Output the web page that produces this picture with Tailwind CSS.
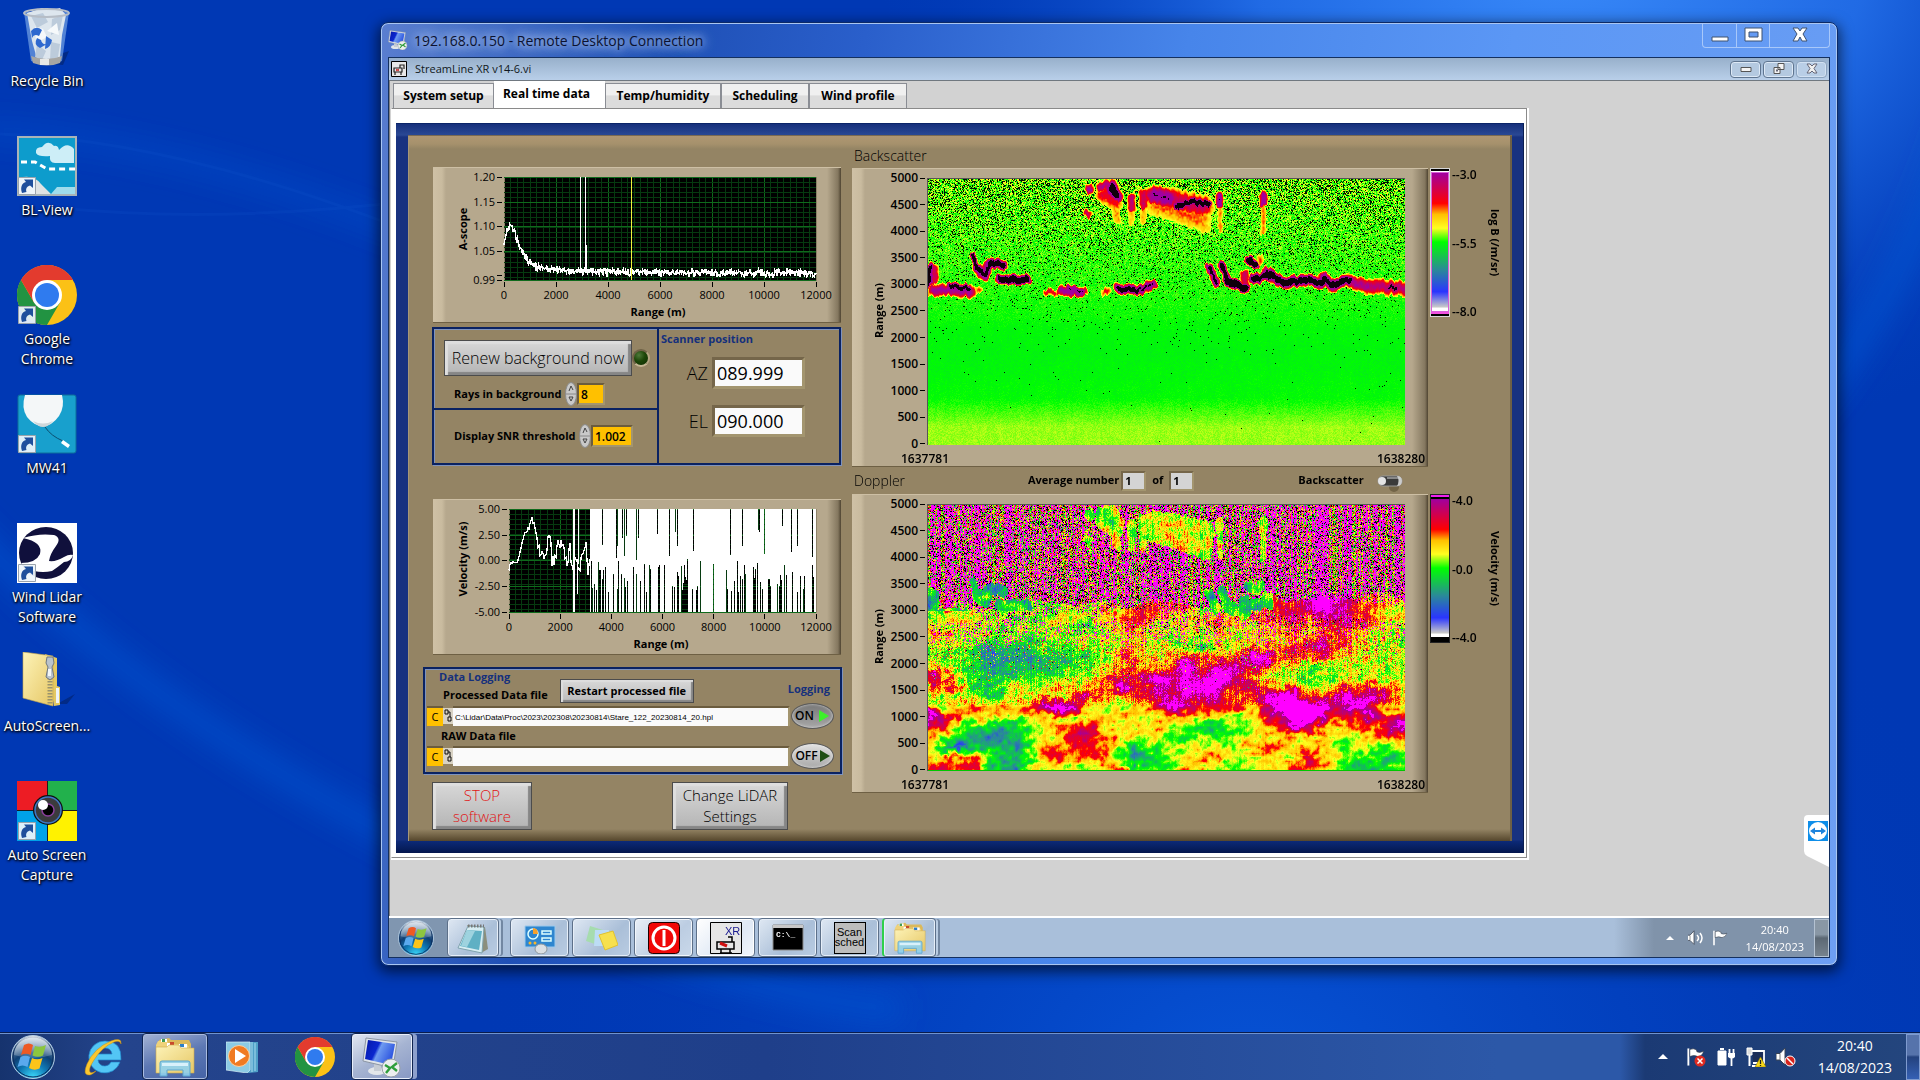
<!DOCTYPE html>
<html lang="en">
  <head>
    <meta charset="UTF-8" />
    <meta name="viewport" content="width=device-width, initial-scale=1.0" />
    <title>192.168.0.150 - Remote Desktop Connection</title>
    <script src="https://cdn.jsdelivr.net/npm/@tailwindcss/browser@4"></script>
  </head>
  <body class="relative h-screen overflow-hidden bg-[#0038b4] font-['Open_Sans','Noto_Sans',sans-serif] flex flex-col">
    <!-- shared icons -->
    <svg class="absolute size-0" aria-hidden="true">
      <defs>
        <radialGradient id="orbFill" cx=".5" cy="1" r="1">
          <stop offset="0" stop-color="#3fe0ff" />
          <stop offset=".35" stop-color="#0f78b4" />
          <stop offset=".6" stop-color="#0e3f74" />
          <stop offset="1" stop-color="#9db6cc" />
        </radialGradient>
        <linearGradient id="gloss" x2="0" y2="1">
          <stop offset="0" stop-color="#fff" stop-opacity=".75" />
          <stop offset="1" stop-color="#fff" stop-opacity=".15" />
        </linearGradient>
        <linearGradient id="folderFill" x2="1" y2="1">
          <stop offset="0" stop-color="#fdf3b8" />
          <stop offset="1" stop-color="#e6c765" />
        </linearGradient>
        <linearGradient id="screenFill" x2="1" y2="0.4">
          <stop offset="0" stop-color="#0418a8" />
          <stop offset=".45" stop-color="#0b27cf" />
          <stop offset=".55" stop-color="#6f9bf0" />
          <stop offset="1" stop-color="#2f57e0" />
        </linearGradient>
      </defs>
      <symbol id="chrome" viewBox="0 0 48 48">
        <circle cx="24" cy="24" r="24" fill="#fbc116" />
        <path d="M24 24 3.2 12A24 24 0 0 1 44.8 12H24z" fill="#e33b2e" />
        <path d="M3.2 12A24 24 0 0 0 24 48L34.4 30 24 24 13.6 30z" fill="#229342" />
        <path d="M3.2 12 13.6 30 24 24 24 12z" fill="#e33b2e" />
        <circle cx="24" cy="24" r="12" fill="#fff" />
        <circle cx="24" cy="24" r="9.6" fill="#2f7bef" />
      </symbol>
      <symbol id="shortcut" viewBox="0 0 18 18">
        <path d="M.5.5h17v17H.5z" fill="#eef5fb" fill-opacity=".93" stroke="#9aa3ac" />
        <path d="M4 16C2 10 4 6 8 5L6 2.500H15V11L12 8.500C8.500 9.500 7.500 12 8.500 15z" fill="#1f4f9c" />
      </symbol>
      <symbol id="orb" viewBox="0 0 44 44">
        <circle cx="22" cy="22" r="21.500" fill="url(#orbFill)" stroke="#b8cfe4" />
        <circle cx="22" cy="22" r="20" fill="none" stroke="#0c2c5c" />
        <path d="M3 20A19 19 0 0 1 41 20Q22 26 3 20z" fill="url(#gloss)" />
        <path d="M13 10q5-3 9 0l-2.500 10q-4.500-2.500-9.500 0z" fill="#ee5a24" />
        <path d="M24 11q5 2 11-1l-3 10.500q-5 2.500-10.500 0z" fill="#8cc63f" />
        <path d="M9.500 22q5-2.500 9.500 0l-2.500 10q-5-3-10 0z" fill="#5aa9ee" />
        <path d="M21 23q5 2.500 10.500 0l-3 10.500q-5 2.500-10.500-.5z" fill="#fcc419" />
      </symbol>
      <symbol id="folders" viewBox="0 0 40 40">
        <path d="M4 3l10-2 2 2h18l2 4v26H4z" fill="#dcb95a" />
        <path d="M1 8 3 4h9l2 3h18l2 3v24H1z" fill="#efd27a" />
        <path d="M12 6h7v4h-7zM24 7h8v4h-8zM6 2h6v3H6z" fill="#fff" />
        <path d="M7 2h3v3H7z" fill="#3f9b54" /><path d="M15 5h4v3h-4z" fill="#c9482c" /><path d="M25 7h4v3h-4z" fill="#2c7ec9" />
        <path d="M1 10h11l2-2h10l2 3h13v25H1z" fill="url(#folderFill)" stroke="#cfa94c" stroke-width=".6" />
        <path d="M5 39V26q0-2 2-2h26q2 0 2 2v13h-7v-6H12v6z" fill="#8fd0ee" fill-opacity=".9" stroke="#5aa5cf" />
        <path d="M7 26h26v3H7z" fill="#d8f1fb" />
      </symbol>
      <symbol id="rdp" viewBox="0 0 40 40">
        <ellipse cx="15" cy="34" rx="9" ry="4" fill="#e2e6ea" />
        <path d="M12 25h7v9h-7z" fill="#c6ccd4" />
        <path d="M4 1 35 5 31 31 1 24z" fill="#dfe4ea" stroke="#8c96a4" />
        <path d="M6 3 33 7 29 28 3 22z" fill="url(#screenFill)" />
        <circle cx="29" cy="31" r="9" fill="#eceeee" stroke="#9aa2a6" />
        <path d="M23 28l5 3-4 5M35 26l-5 4 5 4" stroke="#2f9e3a" stroke-width="2.400" fill="none" />
      </symbol>
      <symbol id="flag" viewBox="0 0 20 20">
        <path d="M2.500 1v18" stroke="#fff" stroke-width="2" />
        <path d="M4 2q4-1.500 7 .5l.5 2q3 1.500 7-.5-1 5-6 5.500-4-2-8.500 0z" fill="#fff" stroke="#333b48" stroke-width=".7" />
      </symbol>
      <symbol id="speaker" viewBox="0 0 20 20">
        <path d="M1 6.500h4L10 1v17l-5-5H1z" fill="#fff" stroke="#3a4454" />
        <path d="M5 7v6" stroke="#777" />
      </symbol>
    </svg>

    <!-- wallpaper -->
    <svg class="absolute inset-0 size-full" viewBox="0 0 1920 1080" preserveAspectRatio="none" aria-hidden="true">
      <defs>
        <radialGradient id="glowTop" cx="1560" cy="-60" r="680" gradientUnits="userSpaceOnUse" gradientTransform="scale(1 .75)">
          <stop offset="0" stop-color="#3a8bfa" /><stop offset=".45" stop-color="#2470ea" stop-opacity=".9" /><stop offset="1" stop-color="#0040c0" stop-opacity="0" />
        </radialGradient>
        <radialGradient id="glowLow" cx="1250" cy="1150" r="800" gradientUnits="userSpaceOnUse">
          <stop offset="0" stop-color="#0858dc" /><stop offset="1" stop-color="#0038b4" stop-opacity="0" />
        </radialGradient>
        <filter id="soft"><feGaussianBlur stdDeviation="14" /></filter>
      </defs>
      <path d="M0 0h1920v1080H0z" fill="#0038b4" />
      <path d="M0 0h1920v1080H0z" fill="url(#glowLow)" />
      <path d="M0 0h1920v1080H0z" fill="url(#glowTop)" />
      <g filter="url(#soft)" fill="none" stroke="#0a56d4" stroke-opacity=".6">
        <path d="M-40 520Q140 710 420 850T900 1010" stroke-width="24" />
        <path d="M-20 130Q180 140 420 240" stroke-width="12" />
        <path d="M1800 420Q1900 300 1960 120" stroke-width="26" />
      </g>
      <path d="M0 134Q180 140 420 236M60 208Q220 224 420 200" fill="none" stroke="#1b62d8" stroke-opacity=".12" stroke-width="3" />
    </svg>

    <!-- desktop icons -->
    <main class="relative flex-1 min-h-0">
      <ul class="absolute left-0 top-[7px] w-[94px] grid auto-rows-[129px] text-center text-[14px] leading-5 text-white [text-shadow:1px_1px_2px_#000,0_1px_3px_#000]">
        <li class="flex flex-col items-center gap-1">
          <svg class="w-12 h-[60px]" viewBox="0 0 48 60">
            <path d="M34 48l12-4-6 14-10-1z" fill="#022a86" />
            <path d="M1 5 8 54q16 7 31 0L46 5z" fill="#6c9be0" fill-opacity=".75" />
            <path d="M4 6 19 1 28 3 37 1 43 8 39 28 37 50 27 54 14 52 9 34z" fill="#dde6ee" />
            <path d="M8 9l12-3 5 9-11 6zM29 12l11-4-3 15-9 5zM14 37l9 7-4 9-7-3zM28 35l9 2-2 13-8 3z" fill="#bccbdb" />
            <path d="M12 20l8 2 4 8-11 6zM24 24l10-8 2 12z" fill="#f6f9fb" />
            <path d="M8 24q5-6 11-1l-3 6q-5-3-7 2zM17 41q-7-3-3-10l4 2q1 5 6 4zM23 29l6 4q-1 7-7 9z" fill="#2f69cf" />
            <ellipse cx="23.500" cy="6" rx="22.500" ry="4" fill="none" stroke="#b6bdc6" stroke-width="2" />
            <path d="M8 49q15 6 31 0l-2 7q-13 5-27 0z" fill="#a7a6a3" />
            <path d="M17 52h9v6h-9z" fill="#e9e9e6" />
          </svg>
          <span>Recycle Bin</span>
        </li>
        <li class="flex flex-col items-center gap-1">
          <svg class="w-[60px] h-[60px]" viewBox="0 0 60 60">
            <path d="M0 0h60v60H0z" fill="#a9b4b8" /><path d="M2 2h56v56H2z" fill="#0d9ccc" />
            <path d="M19 17q-1-6 6-6 6-8 12-1 4-1 5 4 8-9 15-1v14H38q-6 0-5-7-12 1-14-3z" fill="#cdeef7" />
            <path d="M4 26h14l12 7h28" stroke="#fff" stroke-width="3" stroke-dasharray="6 4" fill="none" />
            <path d="M2 58V42q14-4 22 6l10 10z" fill="#dfe3e4" /><path d="M34 58l6-7h18v7z" fill="#9fdcec" />
            <use href="#shortcut" x="1" y="41" width="18" height="18" />
          </svg>
          <span>BL-View</span>
        </li>
        <li class="flex flex-col items-center gap-1">
          <svg class="w-[60px] h-[60px]" viewBox="0 0 60 60"><use href="#chrome" width="60" height="60" /><use href="#shortcut" x="1" y="41" width="18" height="18" /></svg>
          <span>Google Chrome</span>
        </li>
        <li class="flex flex-col items-center gap-1">
          <svg class="w-[60px] h-[60px]" viewBox="0 0 60 60">
            <rect x="1" y="1" width="58" height="58" rx="2" fill="#18a0cd" stroke="#0c6e9a" />
            <path d="M8 1h37q3 12-3 21-7 10-16 10T10 23Q4 14 8 1z" fill="#f4f7f8" /><path d="M16 27q10 5 20 0-5 6-10 6t-10-6z" fill="#cfd7da" />
            <path d="M28 33q6 9 18 14" stroke="#0b4f70" fill="none" /><path d="M46 46l7 5-2 3-7-5z" fill="#fff" />
            <use href="#shortcut" x="1" y="41" width="18" height="18" />
          </svg>
          <span>MW41</span>
        </li>
        <li class="flex flex-col items-center gap-1">
          <svg class="w-[60px] h-[60px]" viewBox="0 0 60 60">
            <path d="M0 0h60v60H0z" fill="#fff" /><ellipse cx="29" cy="30" rx="27" ry="26" fill="#10103c" />
            <path d="M6 15q16-5 31-3 8 3 2 11-6 8-7 15 7 1 15-4 5-3 9-2-2 7-9 7-6 5-12 9-9 2-18 0-9-4-13-8 15 0 19-9 3-12-17-16z" fill="#fff" />
            <use href="#shortcut" x="1" y="41" width="18" height="18" />
          </svg>
          <span>Wind Lidar Software</span>
        </li>
        <li class="flex flex-col items-center gap-1">
          <svg class="w-[60px] h-[60px]" viewBox="0 0 60 60">
            <path d="M40 52 58 42 50 52z" fill="#022a86" />
            <path d="M28 2 40 6v28l3 1v18l-6 1z" fill="#e3c862" />
            <path d="M6 0 36 4v50L6 46z" fill="url(#folderFill)" stroke="#c9aa4c" stroke-width=".6" />
            <path d="M39 36h3v15h-3z" fill="#eef4f8" />
            <path d="M33 26v27" stroke="#9a936c" stroke-width="5" stroke-dasharray="1.500 1.500" />
            <path d="M30 5h6l1 6-2 4 2 10-4 3-4-3 2-10-2-4z" fill="#b9c3cc" stroke="#6d7780" /><path d="M31 17h3v7h-3z" fill="#f2f6f8" />
          </svg>
          <span>AutoScreen...</span>
        </li>
        <li class="flex flex-col items-center gap-1">
          <svg class="w-[60px] h-[60px]" viewBox="0 0 60 60">
            <path d="M0 0h30v30H0z" fill="#ed1c24" /><path d="M31 0h29v29H31z" fill="#22b14c" /><path d="M0 30h30v30H0z" fill="#00a2e8" /><path d="M31 30h29v30H31z" fill="#fff200" />
            <path d="M30.500 0v60M0 29.500h60" stroke="#1c1c1c" />
            <circle cx="31" cy="29" r="15" fill="#111" /><circle cx="31" cy="29" r="13" fill="#3b3b3d" stroke="#3e79c6" stroke-width="1.500" />
            <circle cx="31" cy="29" r="6" fill="#000" stroke="#8b3f9c" stroke-width="1.500" /><circle cx="26" cy="24" r="5" fill="#fff" />
            <use href="#shortcut" x="1" y="41" width="18" height="18" />
          </svg>
          <span>Auto Screen Capture</span>
        </li>
      </ul>

      <!-- remote desktop window -->
      <section class="absolute left-[380px] right-[82px] top-[22px] bottom-[66px] flex flex-col rounded-lg border border-[#0d2a66] bg-[linear-gradient(100deg,#5a7ed0_0%,#1f50b6_18%,#2a5fcb_30%,#4785ea_50%,#5b97f5_70%,#6e9ff3_100%)] px-[7px] pb-[7px] shadow-[inset_0_0_0_1px_#a9c6f2,0_4px_14px_2px_rgba(0,0,0,0.6)]">
        <header class="flex h-[34px] shrink-0 items-start justify-between">
          <h1 class="flex h-[34px] items-center gap-1.5 text-[14px] text-[#0b1230] [text-shadow:0_0_8px_#b9cdf2,0_0_12px_#b9cdf2,0_0_16px_#a9c0ee]">
            <svg class="size-5"><use href="#rdp" width="20" height="20" /></svg>
            192.168.0.150 - Remote Desktop Connection
          </h1>
          <div class="flex h-[25px] rounded-b border border-t-0 border-[#a8c8fa] divide-x divide-[#a8c8fa]">
            <button aria-label="Minimise" class="w-[34px] grid place-items-center"><svg class="w-[18px] h-4"><path d="M1 10h16v4H1z" fill="#fff" stroke="#3f5270" /></svg></button>
            <button aria-label="Maximise" class="w-[33px] grid place-items-center"><svg class="w-[19px] h-4"><path d="M1 1h17v13H1zM5 5v5h9V5z" fill="#fff" fill-rule="evenodd" stroke="#3f5270" /></svg></button>
            <button aria-label="Close" class="w-[59px] grid place-items-center"><svg class="w-4 h-4"><path d="M1 1h5l2 3 2-3h5l-4 6 4 7h-5l-2-4-2 4H1l4-7z" fill="#fff" stroke="#3f5270" /></svg></button>
          </div>
        </header>

        <div class="relative flex min-h-0 flex-1 flex-col border border-[#14305f] bg-[#d2d2d2]">
          <div class="flex h-[23px] shrink-0 items-center gap-2 border-b border-[#707880] bg-[linear-gradient(#98b0cb,#b9cfe9)] px-0.5 text-[11px] text-[#101820]">
            <svg class="w-4 h-4" viewBox="0 0 16 16"><path d="M.5.5h15v15H.5z" fill="#e8e8e8" stroke="#000" /><path d="M3 7h8v4H3zM9 7V4h4v4M4 11v3M10 11v3" fill="none" stroke="#222" stroke-width="1.200" /><path d="M5 8l3 2M8 8l-3 2" stroke="#c22" /></svg>
            <span class="flex-1">StreamLine XR v14-6.vi</span>
            <div class="flex gap-0.5">
              <button aria-label="Minimise VI" class="grid h-[17px] w-[31px] place-items-center rounded-sm border border-[#5f7590] bg-[#b4c9e0] shadow-[inset_0_0_0_1px_#dde9f6]"><svg class="w-3 h-2"><path d="M1 2.500h10v4H1z" fill="#f4f4f4" stroke="#555" /></svg></button>
              <button aria-label="Restore VI" class="grid h-[17px] w-[31px] place-items-center rounded-sm border border-[#5f7590] bg-[#b4c9e0] shadow-[inset_0_0_0_1px_#dde9f6]"><svg class="w-3 h-3"><path d="M5 .5h6v6H5zM1 4.500h6v6H1z" fill="#f4f4f4" stroke="#555" /><path d="M3 6.500h2v2H3z" fill="#667" /></svg></button>
              <button aria-label="Close VI" class="grid h-[17px] w-[31px] place-items-center rounded-sm border border-[#8ba3bf] bg-[#b9cee6] shadow-[inset_0_0_0_1px_#d2e1f2]"><svg class="w-3 h-3"><path d="M1 1h3l2 2 2-2h3L8 5.500 11 10H8L6 8l-2 2H1l3-4.500z" fill="#f0f0f0" stroke="#667" /></svg></button>
            </div>
          </div>

          <div class="flex-1 min-h-0 border-l border-[#808080] pl-px">
            <div role="tablist" class="flex items-end pl-0.5 text-[12px] font-bold text-black">
              <button role="tab" class="h-[25px] w-[101px] border border-b-0 border-[#8a8d94] bg-[linear-gradient(#f0f0f0_45%,#dcdcdc_50%)]">System setup</button>
              <button role="tab" aria-selected="true" class="h-[27px] w-[111px] bg-white pb-0.5 pr-1.5">Real time data</button>
              <button role="tab" class="h-[25px] w-[116px] border border-b-0 border-[#8a8d94] bg-[linear-gradient(#f0f0f0_45%,#dcdcdc_50%)]">Temp/humidity</button>
              <button role="tab" class="h-[25px] w-[88px] border border-b-0 border-[#8a8d94] bg-[linear-gradient(#f0f0f0_45%,#dcdcdc_50%)]">Scheduling</button>
              <button role="tab" class="h-[25px] w-[98px] border border-b-0 border-[#8a8d94] bg-[linear-gradient(#f0f0f0_45%,#dcdcdc_50%)]">Wind profile</button>
            </div>

            <div role="tabpanel" class="w-fit border border-t-[#8a8a8a] border-l-white border-r-[#8a8a8a] border-b-[#8a8a8a] bg-white pt-[14px] pl-1 pr-0.5 pb-1 shadow-[1px_1px_0_1px_#fff]">
              <div class="border-t border-[#0a2468] bg-[linear-gradient(#16307c_0px,#2a4894_11px,transparent_13px),linear-gradient(0deg,#04174e_0px,#0c2a78_12px,transparent_13px)] bg-[#183280] p-3 pt-[11px] shadow-[inset_-1px_0_0_#0a1e50]">
                <div class="flex w-[1104px] gap-2.5 border-t border-[#7a6a52] bg-[#948464] bg-[linear-gradient(#b09672_0px,#a5916c_8px,transparent_13px),linear-gradient(0deg,#55462c_0px,#948464_12px)] pl-[14px] pb-[11px] shadow-[inset_1px_0_0_#a89878,inset_-2px_0_0_#6e6044]">
                  <!-- left column -->
                  <div class="flex w-[420px] flex-col pt-[31px]">
                    <figure class="ml-[11px] h-[156px] w-[408px] bg-[linear-gradient(90deg,#cfc1a6_0px,#c9bb9f_9px,#b6a88d_13px,#b6a88d_394px,#84775f_405px,#4f4431_408px)] shadow-[inset_0_1px_0_#cdbfa4,inset_0_-1px_0_#6e6044]">
                      <svg id="ascope" width="408" height="156" class="text-[11px] [shape-rendering:crispEdges]">
                        <text x="34" y="62" text-anchor="middle" transform="rotate(-90 34 62)" class="text-[11px] font-bold">A-scope</text>
                        <text x="225" y="149" text-anchor="middle" class="text-[11px] font-bold">Range (m)</text>
                      </svg>
                    </figure>

                    <div class="mt-1 ml-2.5 flex h-[138px] w-[409px] border-2 border-[#0a2262] shadow-[inset_1px_1px_0_#7f93bd,1px_1px_0_#7f93bd]">
                      <div class="flex w-[225px] flex-col border-r-2 border-[#0a2262]">
                        <div class="h-[81px] border-b-2 border-[#0a2262] pl-2.5 pt-[11px]">
                          <div class="flex items-center">
                            <button class="h-9 w-[188px] border border-[#4c4c4c] bg-[linear-gradient(#d8d8d8,#b4b4b4)] text-[16px] font-light text-black shadow-[inset_3px_3px_1px_#dedede,inset_-3px_-3px_1px_#868686]">Renew background now</button>
                            <span class="size-[18px] rounded-full border-2 border-[#6f6247] border-r-[#b5a684] border-b-[#c5b694] bg-[radial-gradient(circle_at_35%_30%,#4f7a3a,#1c4608_45%,#0c2a02)]"></span>
                          </div>
                          <div class="flex items-center pl-2.5 pt-1.5 text-[11px] font-bold">
                            <label for="rays" class="w-[111px]">Rays in background</label>
                            <svg class="w-3 h-6" viewBox="0 0 12 24"><ellipse cx="6" cy="12" rx="5.500" ry="11.500" fill="#c9c9c9" stroke="#8b8b8b" /><path d="M4 9l2-5 2 4M4 15h4l-2 4z" fill="none" stroke="#444" /><path d="M1 12h10" stroke="#888" /></svg>
                            <input id="rays" value="8" class="h-[22px] w-7 border-2 border-[#6b5c3e] border-b-[#a3956f] border-r-[#a3956f] bg-[#ffc000] pl-0.5 text-[12px] font-semibold" />
                          </div>
                        </div>
                        <div class="flex items-center pl-5 text-[11px] font-bold pt-3.5">
                          <label for="snr" class="w-[125px]">Display SNR threshold</label>
                          <svg class="w-3 h-6" viewBox="0 0 12 24"><ellipse cx="6" cy="12" rx="5.500" ry="11.500" fill="#c9c9c9" stroke="#8b8b8b" /><path d="M4 9l2-5 2 4M4 15h4l-2 4z" fill="none" stroke="#444" /><path d="M1 12h10" stroke="#888" /></svg>
                          <input id="snr" value="1.002" class="h-[22px] w-[42px] border-2 border-[#6b5c3e] border-b-[#a3956f] border-r-[#a3956f] bg-[#ffc000] pl-0.5 text-[12px] font-semibold" />
                        </div>
                      </div>
                      <div class="flex-1 pl-0.5 pt-0.5 text-[18px]">
                        <h2 class="text-[11px] font-bold leading-4 text-[#15307c]">Scanner position</h2>
                        <div class="mt-2.5 flex items-center justify-end gap-1 pr-[34px]">
                          <label for="az" class="font-light">AZ</label>
                          <input id="az" value="089.999" class="h-8 w-[93px] border-[3px] border-[#75664a] border-b-[#a3956f] border-r-[#a3956f] bg-[#fafafa] pl-0.5" />
                        </div>
                        <div class="mt-4 flex items-center justify-end gap-1 pr-[34px]">
                          <label for="el" class="font-light">EL</label>
                          <input id="el" value="090.000" class="h-8 w-[93px] border-[3px] border-[#75664a] border-b-[#a3956f] border-r-[#a3956f] bg-[#fafafa] pl-0.5" />
                        </div>
                      </div>
                    </div>

                    <figure class="mt-[34px] ml-[11px] h-[156px] w-[408px] bg-[linear-gradient(90deg,#cfc1a6_0px,#c9bb9f_9px,#b6a88d_13px,#b6a88d_394px,#84775f_405px,#4f4431_408px)] shadow-[inset_0_1px_0_#cdbfa4,inset_0_-1px_0_#6e6044]">
                      <svg id="velocity" width="408" height="156" class="text-[11px] [shape-rendering:crispEdges]">
                        <text x="34" y="60" text-anchor="middle" transform="rotate(-90 34 60)" class="text-[11px] font-bold">Velocity (m/s)</text>
                        <text x="228" y="149" text-anchor="middle" class="text-[11px] font-bold">Range (m)</text>
                      </svg>
                    </figure>

                    <div class="mt-3 ml-px h-[107px] w-[419px] border-2 border-[#0a2262] text-[11px] font-bold leading-4 shadow-[inset_1px_1px_0_#7f93bd,1px_1px_0_#7f93bd]">
                      <div class="flex h-[35px] items-start pl-[14px] pr-2.5">
                        <div>
                          <h2 class="text-[#15307c]">Data Logging</h2>
                          <label for="proc" class="block pl-1 pt-0.5">Processed Data file</label>
                        </div>
                        <button class="ml-3 mt-2.5 h-6 w-[134px] border border-[#4c4c4c] bg-[linear-gradient(#d8d8d8,#bcbcbc)] text-[11px] shadow-[inset_2px_2px_1px_#dedede,inset_-2px_-2px_1px_#868686]">Restart processed file</button>
                        <h2 class="ml-auto pt-3 text-[#15307c]">Logging</h2>
                      </div>
                      <div class="flex h-[24px] items-center pl-0.5 pr-1.5">
                        <button class="h-5 w-4 border-t-2 border-[#6b5c3e] bg-[#ffc000] font-normal leading-4">C</button>
                        <svg class="w-[10px] h-4 bg-[#d8d2c4]"><path d="M2 2h3v4H2zM5 9h3v4H5zM5 4h2v5" fill="none" stroke="#111" /></svg>
                        <input id="proc" value="C:\Lidar\Data\Proc\2023\202308\20230814\Stare_122_20230814_20.hpl" class="h-[20px] w-[338px] border-t-2 border-r-2 border-t-[#6b5c3e] border-r-[#a3956f] bg-[#fafafa] pl-0.5 font-['Liberation_Sans',sans-serif] text-[8px] font-normal" />
                        <button class="ml-px h-[26px] w-[43px] shrink-0 rounded-[50%] border border-[#5a5a5a] bg-[linear-gradient(#777,#a8a8a8)] text-[12px] font-semibold shadow-[inset_0_0_3px_#ddd]"><span class="flex items-center justify-center gap-1">ON<svg class="w-3 h-3"><path d="M1 0l10 6-10 6z" fill="#3df02a" /></svg></span></button>
                      </div>
                      <label for="raw" class="block pl-4">RAW Data file</label>
                      <div class="flex h-[24px] items-center pl-0.5 pr-1.5">
                        <button class="h-5 w-4 border-t-2 border-[#6b5c3e] bg-[#ffc000] font-normal leading-4">C</button>
                        <svg class="w-[10px] h-4 bg-[#d8d2c4]"><path d="M2 2h3v4H2zM5 9h3v4H5zM5 4h2v5" fill="none" stroke="#111" /></svg>
                        <input id="raw" class="h-[20px] w-[338px] border-t-2 border-r-2 border-t-[#6b5c3e] border-r-[#a3956f] bg-[#fafafa]" />
                        <button class="ml-px h-[26px] w-[43px] shrink-0 rounded-[50%] border border-[#5a5a5a] bg-[linear-gradient(#e0e0e0,#a8a8a8)] text-[12px] font-semibold shadow-[inset_0_0_3px_#eee]"><span class="flex items-center justify-center gap-0.5">OFF<svg class="w-2.5 h-3"><path d="M0 0l10 6-10 6z" fill="#1f4f14" /></svg></span></button>
                      </div>
                    </div>

                    <div class="mt-2 ml-2.5 flex justify-between pr-[54px] text-[15px] font-light leading-[21px]">
                      <button class="h-12 w-[100px] border border-[#4c4c4c] bg-[linear-gradient(#d8d8d8,#b4b4b4)] text-[#e01414] shadow-[inset_3px_3px_1px_#dedede,inset_-3px_-3px_1px_#868686]">STOP<br />software</button>
                      <button class="h-12 w-[116px] border border-[#4c4c4c] bg-[linear-gradient(#d8d8d8,#b4b4b4)] text-black shadow-[inset_3px_3px_1px_#dedede,inset_-3px_-3px_1px_#868686]">Change LiDAR<br />Settings</button>
                    </div>
                  </div>

                  <!-- right column -->
                  <div class="flex-1 pb-px text-[12px] font-semibold">
                    <h2 class="flex h-8 items-end pb-0.5 pl-0.5 text-[14px] font-light">Backscatter</h2>
                    <div class="flex items-start gap-0.5">
                      <figure class="grid h-[299px] w-[576px] grid-cols-[75px_478px] content-start bg-[linear-gradient(90deg,#cfc1a6_0px,#c9bb9f_9px,#b6a88d_13px,#b6a88d_560px,#84775f_573px,#4f4431_576px)] pt-2.5 shadow-[inset_0_1px_0_#cdbfa4,inset_0_-1px_0_#6e6044]">
                        <div class="-mt-2 flex h-[281px] justify-end gap-1.5">
                          <span class="self-center rotate-180 text-[11px] font-bold leading-3 [writing-mode:vertical-rl]">Range (m)</span>
                          <ol data-axis class="flex h-[282px] flex-col justify-between text-right leading-4"></ol>
                        </div>
                        <canvas id="backscatter" width="477" height="266" class="border-l border-t border-[#555]"></canvas>
                        <div class="col-span-2 flex justify-between pl-[49px] leading-4"><span>1637781</span><span class="-mr-[20px]">1638280</span></div>
                      </figure>
                      <div class="flex">
                        <div class="flex h-[149px] w-5 flex-col border border-[#d8d8d8]">
                          <span class="h-[3px] border-b border-white bg-black"></span>
                          <span class="flex-1 border border-[#d860d8] bg-[linear-gradient(#a000a0_0%,#ff0000_22%,#ffc000_30%,#ffff20_40%,#00ff00_50%,#2a8a98_70%,#2a35ff_86%,#c8c8c8_97%,#ffffff_98%)]"></span>
                          <span class="h-1 border-t-2 border-[#f050e0] bg-black"></span>
                        </div>
                        <ol class="-mt-px flex h-[153px] w-[35px] flex-col justify-between pl-0.5 leading-4"><li>--3.0</li><li>--5.5</li><li>--8.0</li></ol>
                        <span class="h-[149px] text-center text-[11px] font-bold leading-5 [writing-mode:vertical-rl]">log B (/m/sr)</span>
                      </div>
                    </div>
                    <div class="flex h-[27px] items-center pl-0.5 text-[11px] font-bold">
                      <h2 class="w-[174px] text-[14px] font-light">Doppler</h2>
                      <label for="avg">Average number</label>
                      <input id="avg" value="1" class="ml-0.5 h-5 w-[25px] border-2 border-[#75664a] border-b-[#a3956f] border-r-[#a3956f] bg-[#d4d4d4] pl-0.5" />
                      <label for="avgOf" class="px-1.5">of</label>
                      <input id="avgOf" value="1" class="h-5 w-[25px] border-2 border-[#75664a] border-b-[#a3956f] border-r-[#a3956f] bg-[#d4d4d4] pl-0.5" />
                      <label for="mode" class="ml-[104px] w-[79px]">Backscatter</label>
                      <button id="mode"><svg class="w-[26px] h-6"><ellipse cx="17" cy="18" rx="5" ry="5" fill="#5c4e34" opacity=".6" /><rect x="1" y="7" width="24" height="10" rx="5" fill="#3a3a3a" stroke="#999" /><path d="M10 9h12" stroke="#888" stroke-width="2" /><circle cx="5" cy="12" r="4" fill="#e4e4e4" /><path d="M20 7q5 0 5 5t-5 5q3-5 0-10z" fill="#ccc" /></svg></button>
                    </div>
                    <div class="flex items-start gap-0.5">
                      <figure class="grid h-[299px] w-[576px] grid-cols-[75px_478px] content-start bg-[linear-gradient(90deg,#cfc1a6_0px,#c9bb9f_9px,#b6a88d_13px,#b6a88d_560px,#84775f_573px,#4f4431_576px)] pt-2.5 shadow-[inset_0_1px_0_#cdbfa4,inset_0_-1px_0_#6e6044]">
                        <div class="-mt-2 flex h-[281px] justify-end gap-1.5">
                          <span class="self-center rotate-180 text-[11px] font-bold leading-3 [writing-mode:vertical-rl]">Range (m)</span>
                          <ol data-axis class="flex h-[282px] flex-col justify-between text-right leading-4"></ol>
                        </div>
                        <canvas id="doppler" width="477" height="266" class="border-l border-t border-[#555]"></canvas>
                        <div class="col-span-2 flex justify-between pl-[49px] leading-4"><span>1637781</span><span class="-mr-[20px]">1638280</span></div>
                      </figure>
                      <div class="flex">
                        <div class="flex h-[149px] w-5 flex-col border border-[#222]">
                          <span class="h-1 border-b-2 border-black bg-[#f020f0]"></span>
                          <span class="flex-1 bg-[linear-gradient(#a000a0_0%,#ff0000_22%,#ffc000_30%,#ffff20_40%,#00ff00_50%,#2a8a98_70%,#2a35ff_86%,#c8c8c8_97%,#ffffff_98%)]"></span>
                          <span class="h-[5px] bg-black"></span>
                        </div>
                        <ol class="-mt-px flex h-[153px] w-[35px] flex-col justify-between pl-0.5 leading-4"><li>-4.0</li><li>-0.0</li><li>--4.0</li></ol>
                        <span class="h-[149px] text-center text-[11px] font-bold leading-5 [writing-mode:vertical-rl]">Velocity (m/s)</span>
                      </div>
                    </div>
                  </div>
                </div>
              </div>
            </div>
          </div>

          <a href="#" aria-label="TeamViewer" class="absolute right-0 bottom-[90px]">
            <svg class="block w-[25px] h-[52px]"><path d="M25 0H4Q0 0 0 4v32q0 3 3 5l22 11z" fill="#fff" /><path d="M4 6h20v20H4z" fill="#0e8ee9" /><circle cx="14" cy="16" r="9" fill="#fff" /><path d="M6 16l5-3.500v2.500h6v-2.500l5 3.500-5 3.500V17h-6v2.500z" fill="#1d84dd" /></svg>
          </a>

          <!-- remote taskbar -->
          <footer class="flex h-[41px] shrink-0 items-stretch gap-[3px] border-t-2 border-white bg-[linear-gradient(90deg,#8096b0_0px,#8096b0_58px,#a9bfda_64px,#a9bfda_1225px,#8093aa_1265px,#8093aa_100%)] pl-[9px]">
            <button aria-label="Start" class="grid w-9 place-items-center"><svg class="size-9"><use href="#orb" width="36" height="36" /></svg></button>
            <button aria-label="Notepad" class="ml-2.5 grid w-[52px] place-items-center rounded-sm border border-[#5d7089] bg-[linear-gradient(135deg,#dfe8f3,#aabfd8_60%,#b9cce2)] shadow-[inset_0_0_0_1px_#e6eef8,3px_0_0_-1px_#b9cce2,5px_0_0_-1px_#7287a2]"><svg class="size-8" viewBox="0 0 32 32"><path d="M10 3 28 5 31 27 24 31z" fill="#8b8f7c" /><path d="M11 4 27 5 25 31 1 26z" fill="#d6edf2" stroke="#7fa3ae" /><path d="M10 8 25 9 22 28 3 24z" fill="#5fb0c4" /><path d="M10 8l8 1-8 16-6-1z" fill="#9ed3df" /><path d="M11 4h16" stroke="#777" stroke-width="3" stroke-dasharray="1.500 1.500" /></svg></button>
            <button aria-label="Control panel" class="ml-2 grid w-[59px] place-items-center rounded-sm border border-[#5d7089] bg-[linear-gradient(135deg,#dfe8f3,#aabfd8_60%,#b9cce2)] shadow-[inset_0_0_0_1px_#e6eef8]"><svg class="size-8" viewBox="0 0 32 32"><path d="M1 4h30v21H1z" fill="#2e86cf" stroke="#9cc9ec" /><circle cx="9" cy="12" r="5" fill="none" stroke="#dff" stroke-width="1.500" /><path d="M9 12V6q5 0 5 6z" fill="#f6a12c" /><path d="M18 9h9v3h-9zM18 16h9v3h-9z" fill="none" stroke="#dff" stroke-width="1.500" /><circle cx="6" cy="21" r="1.500" fill="#f6b62c" /><circle cx="11" cy="21" r="1.500" fill="#f6b62c" /><ellipse cx="17" cy="27" rx="6" ry="5" fill="#dadfe3" stroke="#8d969c" /></svg></button>
            <button aria-label="Sticky notes" class="grid w-[59px] place-items-center rounded-sm border border-[#5d7089] bg-[linear-gradient(135deg,#dfe8f3,#aabfd8_60%,#b9cce2)] shadow-[inset_0_0_0_1px_#e6eef8]"><svg class="size-8" viewBox="0 0 32 32"><path d="M4 4l13 4-5 15-12-4z" fill="#a6dcae" /><path d="M9 8h14v16H8z" fill="#bcdcf5" /><path d="M13 13l14-4 5 14-13 5z" fill="#f7e04e" stroke="#e0c230" /></svg></button>
            <button aria-label="Shutdown" class="grid w-[59px] place-items-center rounded-sm border border-[#5d7089] bg-[linear-gradient(135deg,#e9eff7,#bccde2_60%,#c9d8ea)] shadow-[inset_0_0_0_1px_#f2f6fb]"><svg class="size-8" viewBox="0 0 32 32"><rect x=".5" y=".5" width="31" height="31" rx="4" fill="#f00808" stroke="#1c0000" /><circle cx="16" cy="16" r="11" fill="none" stroke="#fff" stroke-width="3" /><path d="M16 8v16" stroke="#fff" stroke-width="3" /></svg></button>
            <button aria-label="StreamLine XR" class="grid w-[59px] place-items-center rounded-sm border border-[#5d7089] bg-[linear-gradient(135deg,#ffffff,#dfe8f4_60%,#f2f7fd)] shadow-[inset_0_0_0_1px_#fff]"><svg class="size-8 overflow-visible" viewBox="0 0 32 32"><path d="M.5.5h31v31H.5z" fill="#e6e6e6" stroke="#000" /><text x="15" y="13" class="font-['Liberation_Sans',sans-serif] text-[11px] fill-[#1a1a90]">XR</text><path d="M7 20h17v7H7zM11 27v4M20 27v4M18 15h4v5M10 31h12" fill="none" stroke="#000" stroke-width="1.500" /><path d="M10 21l7 3" stroke="#d01010" stroke-width="3" /></svg></button>
            <button aria-label="Command prompt" class="grid w-[59px] place-items-center rounded-sm border border-[#5d7089] bg-[linear-gradient(135deg,#dfe8f3,#aabfd8_60%,#b9cce2)] shadow-[inset_0_0_0_1px_#e6eef8]"><svg class="size-8" viewBox="0 0 32 32"><path d="M1 3h30v25H1z" fill="#000" stroke="#8a8a8a" /><path d="M1 3h30v3H1z" fill="#c8c8c8" /><text x="4" y="15" class="font-['Liberation_Mono',monospace] text-[8px] font-bold fill-white">C:\_</text></svg></button>
            <button class="grid w-[59px] place-items-center rounded-sm border border-[#5d7089] bg-[linear-gradient(135deg,#dfe8f3,#aabfd8_60%,#b9cce2)] shadow-[inset_0_0_0_1px_#e6eef8]"><span class="h-8 w-8 border border-black bg-[#bdbdbd] pt-1 font-['Liberation_Sans',sans-serif] text-[11px] leading-[10px]">Scan sched</span></button>
            <button aria-label="Explorer" class="grid w-[54px] place-items-center rounded-sm border border-l-2 border-[#5d7089] border-l-[#2fd04c] bg-[linear-gradient(135deg,#dfe8f3,#aabfd8_60%,#b9cce2)] shadow-[inset_0_0_0_1px_#e6eef8,3px_0_0_-1px_#b9cce2,5px_0_0_-1px_#7287a2]"><svg class="size-8"><use href="#folders" width="32" height="32" /></svg></button>
            <div class="ml-auto flex items-center text-[11px] leading-[17px] text-white">
              <svg class="w-2 h-1"><path d="M0 4l4-4 4 4z" fill="#fff" /></svg>
              <svg class="ml-3.5 w-[18px] h-4"><use href="#speaker" width="16" height="16" x="-2" /><path d="M9 5q3 3 0 6M12 3q4 5 0 10" stroke="#fff" stroke-width="1.500" fill="none" /></svg>
              <svg class="ml-1.5 size-4"><use href="#flag" width="16" height="16" /></svg>
              <time class="ml-[18px] text-center">20:40<br />14/08/2023</time>
              <button aria-label="Show remote desktop" class="ml-2.5 h-[38px] w-[15px] border border-[#b4c2d2] bg-[linear-gradient(#8997a5_40%,#5c6874_50%,#76838f)]"></button>
            </div>
          </footer>
        </div>
      </section>
    </main>

    <!-- taskbar -->
    <footer class="relative flex h-12 shrink-0 items-stretch border-t border-[#0a1c4c] bg-[linear-gradient(90deg,#16336e_0px,#24448c_120px,#1f3f8a_40%,#2c58a8_78%,#2c58a8_1620px,#1b3a74_1645px,#24467e_100%)] pl-2.5 shadow-[inset_0_1px_0_#6f93cf]">
      <button aria-label="Start" class="grid w-[46px] place-items-center"><svg class="size-11"><use href="#orb" width="44" height="44" /></svg></button>
      <button aria-label="Internet Explorer" class="ml-7 grid w-10 place-items-center">
        <svg class="size-10" viewBox="0 0 40 40"><path d="M21 4a16 16 0 1 0 15 21h-9q-2 4-6 4-6 0-7-6h23Q38 4 21 4zm-7 13q1-6 7-6t7 6z" fill="#53c6f5" stroke="#1c82c8" stroke-width=".7" /><path d="M37 7Q38 0 27 4 10 11 3 27q-5 12 3 11 3-1 6-4-5 3-6 1-2-3 4-12Q18 10 30 5q6-2 7 2z" fill="#fbc72f" stroke="#c98f12" stroke-width=".5" /></svg>
      </button>
      <button aria-label="File Explorer" class="ml-[18px] grid w-[66px] place-items-center rounded border border-[#0f2450] bg-[linear-gradient(160deg,#a5b4d4,#5d78b4_50%,#4463a6)] shadow-[inset_0_0_0_1px_#a9bbe0]"><svg class="size-10"><use href="#folders" width="40" height="40" /></svg></button>
      <button aria-label="Media Player" class="ml-4 grid w-[36px] place-items-center">
        <svg class="w-8 h-8" viewBox="0 0 32 32"><path d="M4 1h28v30l-10 1z" fill="#4fa0c8" /><path d="M26 1v30M29 2v28" stroke="#a8dcee" /><path d="M0 1h24v28l-3 3-21-3z" fill="#8ccbe4" stroke="#d5eef7" stroke-width=".7" /><circle cx="13" cy="15" r="10.500" fill="#f07a22" stroke="#fbd0a0" /><path d="M9 8l11 7-11 7z" fill="#fff" /></svg>
      </button>
      <button aria-label="Google Chrome" class="ml-[34px] grid w-[42px] place-items-center"><svg class="size-10"><use href="#chrome" width="40" height="40" /></svg></button>
      <button aria-label="Remote Desktop Connection" class="ml-[15px] grid w-[62px] place-items-center rounded border border-[#0f2450] bg-[linear-gradient(150deg,#e3e8f2,#a6b4d2_50%,#8798c4)] shadow-[inset_0_0_0_1px_#e8eefa,5px_0_0_-1px_#8da0cc]"><svg class="size-10"><use href="#rdp" width="40" height="40" /></svg></button>
      <div class="ml-auto flex items-center text-[14px] leading-[22px] text-white">
        <svg class="w-2.5 h-[5px]"><path d="M0 5l5-5 5 5z" fill="#fff" /></svg>
        <svg class="ml-[18px] size-5"><use href="#flag" width="19" height="20" /><circle cx="14" cy="14" r="5.500" fill="#e02a20" /><path d="M11.500 11.500l5 5M16.500 11.500l-5 5" stroke="#fff" stroke-width="1.500" /></svg>
        <svg class="ml-2.5 size-5"><path d="M2 4h8v14H2z" fill="#fff" stroke="#fff" /><path d="M4 1h4v2H4z" fill="#fff" /><path d="M12 6h7v4q-3 3-7 0z" fill="#fff" /><path d="M13.500 2v4M17.500 2v4M15.500 11v8" fill="none" stroke="#fff" stroke-width="1.800" /></svg>
        <svg class="ml-2.5 size-5"><path d="M6 4h12v12H7" fill="#1b2e58" stroke="#fff" stroke-width="1.800" /><path d="M1 1h5v7H1z" fill="#ddd" stroke="#fff" /><path d="M3.500 8v11M6 19h6" stroke="#fff" stroke-width="2" /><path d="M14.500 10l5.500 10H9z" fill="#f8d818" stroke="#8a7300" stroke-width=".6" /><path d="M14.500 13v4M14.500 18v1" stroke="#222" stroke-width="1.300" /></svg>
        <svg class="ml-2.5 size-5"><use href="#speaker" width="20" height="20" x="-1" /><circle cx="14" cy="14" r="5" fill="#d8231c" stroke="#fff" /><path d="M11 11l6 6" stroke="#fff" stroke-width="1.500" /></svg>
        <time class="ml-[22px] text-center">20:40<br />14/08/2023</time>
        <button aria-label="Show desktop" class="ml-3.5 h-[46px] w-[14px] border border-[#7f9bcf] bg-[linear-gradient(#5673ab_45%,#24427e_50%,#3560b4)]"></button>
      </div>
    </footer>

    <script>
      const NS = "http://www.w3.org/2000/svg";

      const makeRandom = (seed) => () => {
        seed = (seed + 0x6d2b79f5) | 0;
        let t = Math.imul(seed ^ (seed >>> 15), 1 | seed);
        t = (t + Math.imul(t ^ (t >>> 7), 61 | t)) ^ t;
        return ((t ^ (t >>> 14)) >>> 0) / 4294967296;
      };
      const random = makeRandom(20230814);

      const add = (svg, name, attrs, text) => {
        const el = document.createElementNS(NS, name);
        for (const key in attrs) el.setAttribute(key, attrs[key]);
        if (text !== undefined) el.textContent = text;
        svg.appendChild(el);
      };

      // range axis of the two time-height plots
      document.querySelectorAll("[data-axis]").forEach((axis) => {
        for (let r = 5000; r >= 0; r -= 500) {
          const li = document.createElement("li");
          li.className = "flex items-center justify-end gap-0.5 pr-0.5 after:h-px after:w-[5px] after:bg-black";
          li.textContent = r;
          axis.appendChild(li);
        }
      });

      // line graph frame: black plot with green grid, ticks and numbers
      const drawFrame = (svg, x0, y0, w, h, yTicks, gridY) => {
        add(svg, "rect", { x: x0, y: y0, width: w, height: h, fill: "#000", stroke: "#8d8369" });
        for (let i = 1; i < 48; i++) {
          const x = x0 + (i * w) / 48;
          add(svg, "path", { d: `M${x} ${y0}v${h}`, stroke: i % 8 ? "#063a10" : "#0f6a1c" });
        }
        for (let y = y0 + gridY; y < y0 + h; y += gridY)
          add(svg, "path", { d: `M${x0} ${y}h${w}`, stroke: "#063a10" });
        for (let i = 0; i <= 6; i++) {
          const x = x0 + (i * w) / 6;
          add(svg, "path", { d: `M${x} ${y0 + h + 2}v5`, stroke: "#000" });
          add(svg, "text", { x, y: y0 + h + 19, "text-anchor": "middle" }, i * 2000);
        }
        yTicks.forEach(([label, y]) => {
          add(svg, "path", { d: `M${x0} ${y0 + y}h${w}`, stroke: "#0f6a1c" });
          add(svg, "path", { d: `M${x0 - 7} ${y0 + y}h5`, stroke: "#000" });
          add(svg, "text", { x: x0 - 9, y: y0 + y + 4, "text-anchor": "end" }, label);
        });
      };

      const interp = (pts, x) => {
        for (let i = 1; i < pts.length; i++) {
          if (x <= pts[i][0]) {
            const [a, b] = pts[i - 1], [c, d] = pts[i];
            return b + ((d - b) * (x - a)) / (c - a);
          }
        }
        return pts[pts.length - 1][1];
      };

      const drawAscope = () => {
        const svg = document.getElementById("ascope");
        const x0 = 71, y0 = 10, w = 312, h = 103;
        drawFrame(svg, x0, y0, w, h, [["1.20", 0], ["1.15", 25], ["1.10", 49], ["1.05", 74], ["0.99", 103]], 5);
        add(svg, "path", { d: `M${x0 - 7} ${y0 + 98}h5`, stroke: "#000" });
        const shape = [[0, 66], [3, 52], [6, 48], [10, 54], [16, 70], [22, 82], [30, 89], [45, 92], [75, 94], [110, 95], [312, 96]];
        let d = `M${x0} ${y0 + 66}`;
        for (let x = 0; x <= w; x += 0.5) d += `L${x0 + x} ${y0 + interp(shape, x) + (random() + random() - 1) * 5}`;
        add(svg, "path", { d, fill: "none", stroke: "#fff", "stroke-width": 1.4 });
        add(svg, "path", { d: `M${x0 + 76.5} ${y0}v95M${x0 + 81.5} ${y0}v95M${x0 + 82.5} ${y0 + 68}v28`, stroke: "#fff" });
        add(svg, "path", { d: `M${x0 + 127.5} ${y0}v${h}`, stroke: "#f2f23c" });
      };

      const drawVelocity = () => {
        const svg = document.getElementById("velocity");
        const x0 = 76, y0 = 10, w = 307, h = 103;
        drawFrame(svg, x0, y0, w, h, [["5.00", 0], ["2.50", 26], ["0.00", 51], ["-2.50", 77], ["-5.00", 103]], 5);
        const shape = [[0, 60], [2, 54], [8, 55], [12, 40], [15, 25], [20, 19], [23, 10], [26, 18], [29, 38], [34, 50], [38, 37], [41, 24], [43, 52], [47, 50], [49, 33], [54, 37], [58, 55], [61, 40], [63, 60], [66, 48], [70, 62], [73, 45], [77, 33], [79, 60], [81, 50]];
        let d = `M${x0} ${y0 + 60}`;
        for (let x = 0; x <= 81; x++) d += `L${x0 + x} ${y0 + interp(shape, x) + (random() - 0.5) * (x > 27 ? 12 : 4)}`;
        add(svg, "path", { d, fill: "none", stroke: "#fff", "stroke-width": 1.3 });
        let bars = `M${x0 + 64.5} ${y0}v${h}M${x0 + 65.5} ${y0}v${h}M${x0 + 69.5} ${y0}v55M${x0 + 68.5} ${y0 + 50}v35`;
        for (let x = 81; x < w; x++) {
          const top = random() < 0.15 ? 15 + random() * 38 : 0;
          const bottom = random() < (x < 100 ? 0.55 : 0.27) ? 50 + random() * 34 : h;
          bars += `M${x0 + x + 0.5} ${y0 + top}V${y0 + bottom}`;
        }
        add(svg, "path", { d: bars, stroke: "#fff", "stroke-width": 1 });
      };

      const STOPS = [
        [0, 200, 200, 200], [0.14, 42, 53, 255], [0.3, 42, 138, 152], [0.42, 10, 210, 60], [0.5, 0, 255, 0],
        [0.6, 255, 255, 32], [0.7, 255, 192, 0], [0.78, 255, 0, 0], [1, 160, 0, 160],
      ];
      const colour = (t) => {
        if (t < 0) return [0, 0, 0];
        if (t > 1) return [255, 0, 255];
        for (let i = 1; i < STOPS.length; i++) {
          if (t <= STOPS[i][0]) {
            const a = STOPS[i - 1], b = STOPS[i], k = (t - a[0]) / (b[0] - a[0]);
            return [1, 2, 3].map((c) => a[c] + (b[c] - a[c]) * k);
          }
        }
      };

      const lattice = Array.from({ length: 4096 }, () => random());
      const at = (x, y) => lattice[(x * 57 + y * 131) & 4095];
      const noise = (x, y) => {
        const xi = Math.floor(x), yi = Math.floor(y), u = x - xi, v = y - yi;
        const a = at(xi, yi) * (1 - u) + at(xi + 1, yi) * u;
        const b = at(xi, yi + 1) * (1 - u) + at(xi + 1, yi + 1) * u;
        return a * (1 - v) + b * v - 0.5;
      };

      // cloud layers: x1, y1, x2, y2, radius, peak
      const CLOUDS = [
        [1, 88, 1, 102, 6, 0.8], [6, 88, 7, 101, 4, 0.5], [5, 111, 42, 112, 7, 0.62], [22, 108, 40, 108, 5, 0.85],
        [44, 74, 49, 88, 3, 0.9], [49, 88, 56, 96, 6, 0.8], [56, 96, 61, 84, 6, 0.8], [61, 83, 74, 87, 6, 0.9],
        [72, 101, 98, 101, 6, 1], [50, 109, 51, 110, 4, 0.3], [118, 113, 126, 113, 4, 0.4], [133, 112, 154, 112, 6, 0.65],
        [140, 108, 154, 111, 4, 0.75], [177, 113, 178, 113, 5, 0.4], [190, 108, 208, 112, 6, 0.85], [208, 112, 224, 105, 6, 0.75],
        [281, 88, 288, 103, 5, 0.8], [293, 86, 300, 101, 5, 0.9], [300, 101, 316, 108, 6, 1.1], [317, 107, 316, 93, 5, 0.5],
        [320, 80, 326, 86, 5, 1], [332, 77, 332, 82, 4, 0.3], [325, 100, 340, 96, 6, 0.9], [340, 93, 352, 102, 7, 0.9],
        [352, 102, 395, 102, 7, 0.9], [395, 98, 404, 106, 7, 0.8], [404, 104, 420, 102, 7, 0.9], [420, 102, 440, 107, 8, 0.6],
        [440, 107, 477, 108, 9, 0.54], [462, 108, 468, 108, 3, 0.9],
        [161, 8, 161, 10, 5, 0.6], [159, 34, 159, 34, 5, 0.5], [172, 7, 178, 6, 6, 0.6], [184, 10, 187, 15, 9, 0.9],
        [175, 15, 186, 24, 9, 0.4], [186, 24, 188, 40, 5, 0.25], [203, 19, 203, 30, 5, 0.55], [203, 30, 203, 44, 4, 0.2],
        [215, 14, 215, 26, 6, 0.5], [215, 26, 215, 42, 4, 0.22], [226, 16, 240, 20, 11, 0.72], [240, 20, 274, 27, 13, 0.5],
        [228, 26, 272, 40, 13, 0.28], [268, 36, 276, 48, 8, 0.22], [248, 28, 262, 22, 5, 0.9], [262, 22, 279, 25, 5, 0.95],
        [291, 16, 291, 26, 4, 0.7], [291, 26, 292, 52, 3, 0.25], [335, 16, 335, 24, 5, 0.7], [335, 24, 335, 54, 3, 0.26],
      ];

      const cloudAt = (x, y) => {
        let best = 0;
        const jx = x + noise(x * 0.3, y * 0.3) * 2;
        const jy = y + noise(x * 0.35 + 40, 7) * 4 + noise(x * 0.8, y * 0.2) * 2;
        for (const [x1, y1, x2, y2, r, peak] of CLOUDS) {
          const dx = x2 - x1, dy = y2 - y1, len = dx * dx + dy * dy || 1;
          const k = Math.max(0, Math.min(1, ((jx - x1) * dx + (jy - y1) * dy) / len));
          const d = Math.hypot(jx - x1 - dx * k, jy - y1 - dy * k) / r;
          if (d < 1) best = Math.max(best, peak * (1 - d * d));
        }
        return best;
      };

      const paint = (id, pixel) => {
        const canvas = document.getElementById(id);
        const ctx = canvas.getContext("2d");
        const image = ctx.createImageData(canvas.width, canvas.height);
        for (let y = 0, i = 0; y < canvas.height; y++) {
          for (let x = 0; x < canvas.width; x++, i += 4) {
            const [r, g, b] = pixel(x, y);
            image.data[i] = r;
            image.data[i + 1] = g;
            image.data[i + 2] = b;
            image.data[i + 3] = 255;
          }
        }
        ctx.putImageData(image, 0, 0);
      };

      const backscatterPixel = (x, y) => {
        const c = cloudAt(x, y);
        if (c > 0.07) {
          const t = 0.53 + c * 0.75 + noise(x * 0.7, y * 0.5) * 0.08;
          return t > 1.08 ? [15, 0, 10] : colour(Math.min(t, 1));
        }
        const high = Math.max(0, (150 - y) / 150);
        const gap = y < 115 ? 0.05 + high * high * 0.24 : 0.04 * Math.exp((115 - y) / 28);
        if (random() < gap) return [0, 20, 0];
        const ground = y > 218 ? Math.min(0.065, (y - 218) * 0.0022) : 0;
        const haze = y > 140 ? -0.012 * Math.max(0, 1 - Math.abs(y - 175) / 50) : 0;
        const spread = 0.03 + high * 0.14;
        return colour(0.495 + ground + haze + high * 0.05 + (random() - 0.5) * spread + noise(x * 0.3, y * 0.1) * 0.012);
      };

      // velocity classes on a coarse grid, 2900 m at the top and ground level at the bottom
      const FIELD = [
        "4M556666546657788888433467889MM98776",
        "456655454565767887667777888988998876",
        "666555555664456875666766677877888765",
        "775554556656556766555666676778887664",
        "555433334445566755544566778889886655",
        "544322223333458866787778MM7888866665",
        "644322333344567877 8M89M998665556655",
        "98543333445567889M9M9MM9765544465655",
        "88633466577678M9899MMM98976655678877",
        "55553566667987688999998889MM889M9M96",
        "657877689MM8655679M9988879MMMM99M976",
        "M96777676656677667777665689MMM898M78",
        "87443234677897677754334556899767879M",
        "753322345689877656445445667767766778",
        "611333236878875344566656787667645546",
        "677743347877885234567866666697644434",
        "888843246756568444577555567887643344",
      ].map((row) => row.replace(/ /g, ""));
      const LEVEL = { 1: 0.17, 2: 0.29, 3: 0.4, 4: 0.49, 5: 0.56, 6: 0.62, 7: 0.69, 8: 0.8, 9: 0.94, M: 1.12 };
      const cell = (cx, cy) => {
        const row = FIELD[Math.max(0, Math.min(16, cy))];
        return LEVEL[row[Math.max(0, Math.min(row.length - 1, cx))]];
      };
      const fieldAt = (x, y) => {
        const wx = x + noise(x * 0.08, y * 0.12) * 10 + noise(x * 0.3, y * 0.3) * 9;
        const wy = y + noise(x * 0.07 + 30, y * 0.1) * 6 + noise(x * 0.3 + 9, y * 0.3) * 8;
        const gx = wx / 13.25 - 0.5, gy = (wy - 96) / 10 - 0.5;
        const xi = Math.floor(gx), yi = Math.floor(gy), u = gx - xi, v = gy - yi;
        return (cell(xi, yi) * (1 - u) + cell(xi + 1, yi) * u) * (1 - v) + (cell(xi, yi + 1) * (1 - u) + cell(xi + 1, yi + 1) * u) * v;
      };

      // some profiles fold to the top of the scale, which shows as vertical stripes
      const columnBias = Array.from({ length: 477 }, () => (random() < 0.55 ? 0.7 + random() * 0.3 : random() * 0.45));
      const dopplerPixel = (x, y) => {
        if (y > 264) return [0, 200, 0];
        const c = y < 118 ? cloudAt(x, y) : 0;
        const edge = 98 + noise(x * 0.04, 2) * 14 - (x > 380 ? 8 : 0);
        const bad = y < edge ? 1 : Math.max(0, 0.48 - (y - edge) * 0.0055);
        if (c < 0.05 && random() < bad * (0.3 + columnBias[x]) + (y < edge ? 0.6 : 0)) {
          const pick = random();
          if (pick < 0.16) return y < edge + 30 || pick < 0.03 ? [10, 0, 12] : colour(fieldAt(x, y) - 0.1);
          if (pick < 0.16 + columnBias[x] * 0.76) return y < edge + 40 ? [250, 4, 250] : colour(fieldAt(x, y) + random() * 0.45);
          return colour(0.38 + random() * 0.45);
        }
        let t;
        if (y < 65) t = 0.57 + noise(x * 0.12, y * 0.12) * 0.22 + (x > 240 && x < 280 ? 0.05 : 0);
        else if (c > 0.05 && ((x > 270 && x < 345) || (x < 108 && y < 106))) t = 0.42 + noise(x * 0.12, y * 0.12) * 0.3;
        else t = fieldAt(x, y);
        const grain = y < 200 ? 0.16 : 0.03;
        const detail = noise(x * 0.2 + y * 0.05, y * 0.25) * 0.2 + noise(x * 0.5, y * 0.4) * 0.08;
        return colour(Math.max(0.12, t + (columnBias[x] - 0.5) * grain * 0.7 + (random() - 0.5) * grain + detail));
      };

      drawAscope();
      drawVelocity();
      paint("backscatter", backscatterPixel);
      paint("doppler", dopplerPixel);
    </script>
  </body>
</html>
